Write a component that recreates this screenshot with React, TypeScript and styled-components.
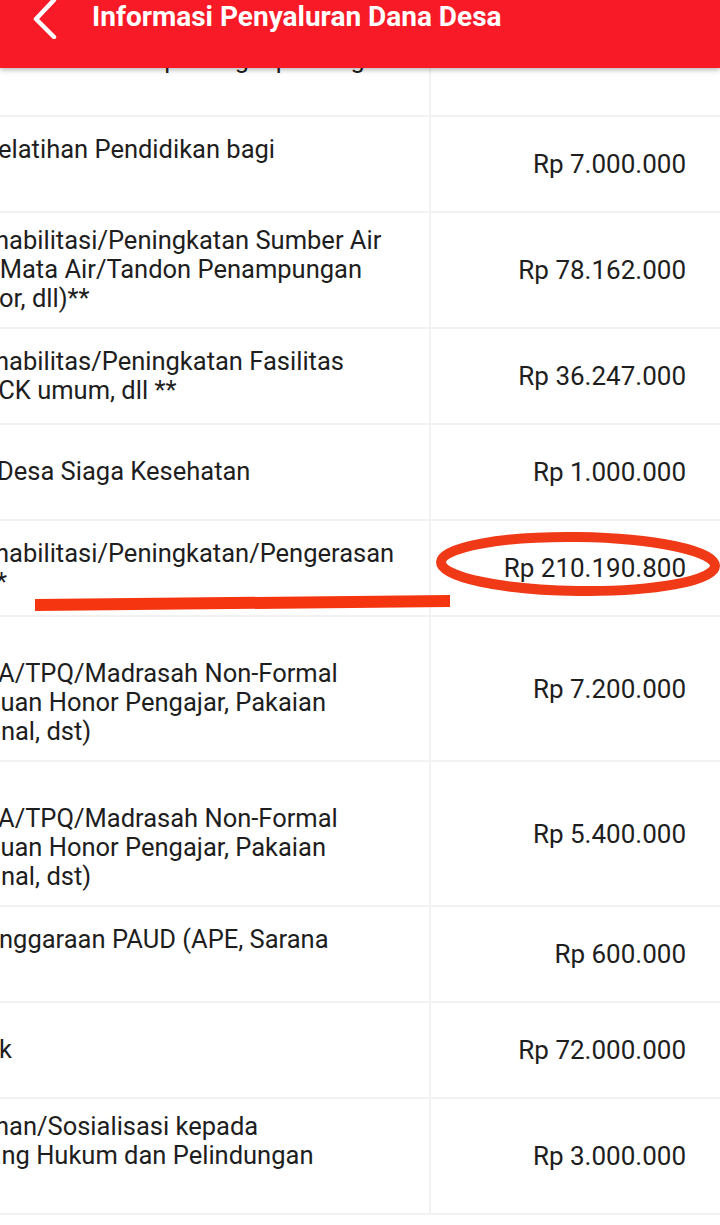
import styled, { createGlobalStyle } from "styled-components";

const GlobalStyle = createGlobalStyle`
  html, body {
    margin: 0;
    padding: 0;
    background: #ffffff;
  }
  body {
    font-family: Roboto, "Noto Sans", "Liberation Sans", sans-serif;
    overflow: hidden;
  }
`;

const Screen = styled.div`
  position: relative;
  width: 720px;
  height: 1225px;
  overflow: hidden;
  background: #ffffff;
`;

const Toolbar = styled.header`
  position: absolute;
  top: 0;
  left: 0;
  right: 0;
  z-index: 3;
  height: 68px;
  display: flex;
  align-items: flex-start;
  background: #f91a27;
  box-shadow: 0 2px 5px rgba(0, 0, 0, 0.28);
`;

const BackIcon = styled.svg`
  display: block;
  flex: none;
  margin: -1px 0 0 28px;
`;

const Title = styled.h1`
  margin: 1px 0 0 34px;
  font-size: 28px;
  line-height: 32px;
  font-weight: 700;
  color: #ffffff;
`;

const Table = styled.div`
  display: flex;
  flex-direction: column;
  padding-top: 21px;
`;

const Row = styled.div`
  position: relative;
  display: grid;
  grid-template-columns: 431px 1fr;
  min-height: 96px;
  box-sizing: border-box;
  border-bottom: 2px solid #f2f2f2;
`;

const TextCell = styled.div<{ $drop?: number }>`
  display: flex;
  flex-direction: column;
  justify-content: center;
  padding: ${(p) => 13 + (p.$drop ?? 0)}px 0 ${(p) => Math.max(0, 14 - (p.$drop ?? 0))}px;
  overflow: hidden;
  box-sizing: border-box;
  border-right: 2px solid #f2f2f2;
`;

const Line = styled.div<{ $shift: number }>`
  height: 29px;
  line-height: 29px;
  font-size: 25.5px;
  color: #1e1e1e;
  white-space: nowrap;
  margin-left: ${(p) => p.$shift}px;
`;

const AmountCell = styled.div`
  display: flex;
  align-items: center;
  justify-content: flex-end;
  padding-right: 34px;
  font-size: 26px;
  color: #1e1e1e;
  white-space: nowrap;
`;

const Marks = styled.svg`
  position: absolute;
  left: 0;
  top: 0;
  overflow: visible;
  pointer-events: none;
`;

interface Entry {
  lines: string[];
  shift?: number[];
  amount: string;
  drop?: number;
  marked?: boolean;
}

const entries: Entry[] = [
  { lines: ["ebersihan dan perlengkapan kegiatan", ""], shift: [-2], amount: "", drop: 6 },
  { lines: ["elatihan Pendidikan bagi", ""], shift: [-2], amount: "Rp 7.000.000" },
  {
    lines: ["habilitasi/Peningkatan Sumber Air", "(Mata Air/Tandon Penampungan", "Bor, dll)**"],
    shift: [-5, -9, -17],
    amount: "Rp 78.162.000",
  },
  {
    lines: ["habilitas/Peningkatan Fasilitas", "MCK umum, dll **"],
    shift: [-5, -24],
    amount: "Rp 36.247.000",
  },
  { lines: ["Desa Siaga Kesehatan"], shift: [-3], amount: "Rp 1.000.000" },
  {
    lines: ["habilitasi/Peningkatan/Pengerasan", "**"],
    shift: [-5, -15],
    amount: "Rp 210.190.800",
    marked: true,
  },
  {
    lines: ["", "A/TPQ/Madrasah Non-Formal", "ntuan Honor Pengajar, Pakaian", "sional, dst)"],
    shift: [0, -2, -22, -33],
    amount: "Rp 7.200.000",
  },
  {
    lines: ["", "A/TPQ/Madrasah Non-Formal", "ntuan Honor Pengajar, Pakaian", "sional, dst)"],
    shift: [0, -2, -22, -33],
    amount: "Rp 5.400.000",
  },
  { lines: ["nggaraan PAUD (APE, Sarana", ""], shift: [-1], amount: "Rp 600.000" },
  { lines: ["k"], shift: [-1], amount: "Rp 72.000.000" },
  {
    lines: ["han/Sosialisasi kepada", "idang Hukum dan Pelindungan", ""],
    shift: [-5, -33],
    amount: "Rp 3.000.000",
  },
];

function Annotation() {
  return (
    <Marks width="720" height="96" viewBox="0 0 720 96">
      <ellipse
        cx="578"
        cy="43"
        rx="137"
        ry="27"
        fill="none"
        stroke="#f03a17"
        strokeWidth="10"
        transform="rotate(0.8 578 43)"
      />
      <polygon points="35,78 450,74 450,86 35,90" fill="#f5350f" />
    </Marks>
  );
}

export default function App() {
  return (
    <Screen>
      <GlobalStyle />
      <Toolbar>
        <BackIcon width="30" height="40" viewBox="0 0 30 40">
          <polyline
            points="26,1 8,20 26,38"
            fill="none"
            stroke="#ffffff"
            strokeWidth="4.5"
            strokeLinecap="round"
            strokeLinejoin="round"
          />
        </BackIcon>
        <Title>Informasi Penyaluran Dana Desa</Title>
      </Toolbar>
      <Table>
        {entries.map((e, i) => (
          <Row key={i}>
            <TextCell $drop={e.drop}>
              {e.lines.map((l, j) => (
                <Line key={j} $shift={e.shift?.[j] ?? 0}>
                  {l || "\u00a0"}
                </Line>
              ))}
            </TextCell>
            <AmountCell>{e.amount}</AmountCell>
            {e.marked && <Annotation />}
          </Row>
        ))}
      </Table>
    </Screen>
  );
}
